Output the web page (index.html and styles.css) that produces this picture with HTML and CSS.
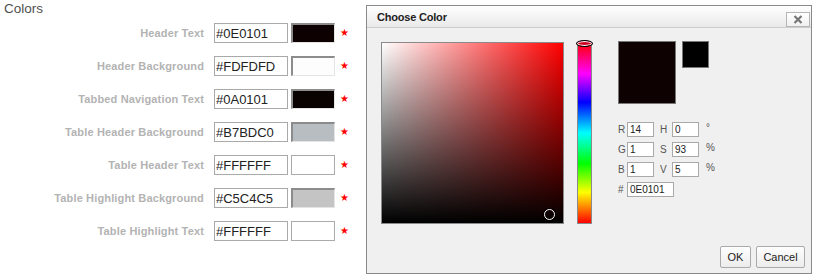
FILE: index.html
```html
<!DOCTYPE html>
<html>
<head>
<meta charset="utf-8">
<link rel="stylesheet" href="styles.css">
</head>
<body>
<div class="panel">
  <div class="heading">Colors</div>
  <div class="rows">
    <div class="lbl">Header Text</div><input class="hex" value="#0E0101"><span class="sw" style="background:#0E0101"></span><span class="star">★</span>
    <div class="lbl">Header Background</div><input class="hex" value="#FDFDFD"><span class="sw" style="background:#FDFDFD"></span><span class="star">★</span>
    <div class="lbl">Tabbed Navigation Text</div><input class="hex" value="#0A0101"><span class="sw" style="background:#0A0101"></span><span class="star">★</span>
    <div class="lbl">Table Header Background</div><input class="hex" value="#B7BDC0"><span class="sw" style="background:#B7BDC0"></span><span class="star">★</span>
    <div class="lbl">Table Header Text</div><input class="hex" value="#FFFFFF"><span class="sw sw-flat" style="background:#FFFFFF"></span><span class="star">★</span>
    <div class="lbl">Table Highlight Background</div><input class="hex" value="#C5C4C5"><span class="sw" style="background:#C5C4C5"></span><span class="star">★</span>
    <div class="lbl">Table Highlight Text</div><input class="hex" value="#FFFFFF"><span class="sw sw-flat" style="background:#FFFFFF"></span><span class="star">★</span>
  </div>
</div>

<div class="dlg">
  <div class="titlebar">
    <span class="title">Choose Color</span>
    <button class="close"><svg width="10" height="9" viewBox="0 0 10 9"><path d="M1.5 1 L8.5 8 M8.5 1 L1.5 8" stroke="#777" stroke-width="2.2" fill="none"/></svg></button>
  </div>
  <div class="dbody">
    <div class="sat"><span class="marker"></span></div>
    <div class="hue"><span class="handle"></span></div>
    <div class="side">
      <div class="previews">
        <div class="pv-new"></div>
        <div class="pv-old"></div>
      </div>
      <div class="fields">
        <div class="frow"><span class="fl">R</span><input class="fi" value="14"><span class="fl fl2">H</span><input class="fi" value="0"><span class="fu">°</span></div>
        <div class="frow"><span class="fl">G</span><input class="fi" value="1"><span class="fl fl2">S</span><input class="fi" value="93"><span class="fu">%</span></div>
        <div class="frow"><span class="fl">B</span><input class="fi" value="1"><span class="fl fl2">V</span><input class="fi" value="5"><span class="fu">%</span></div>
        <div class="frow"><span class="fl">#</span><input class="fi fi-hex" value="0E0101"></div>
      </div>
    </div>
  </div>
  <div class="footer">
    <button class="btn btn-ok">OK</button>
    <button class="btn btn-cancel">Cancel</button>
  </div>
</div>
</body>
</html>
```
FILE: styles.css
```css
* { box-sizing: border-box; }
body {
  margin: 0;
  width: 822px;
  height: 278px;
  background: #fff;
  font-family: "Liberation Sans", Arial, sans-serif;
  position: relative;
  overflow: hidden;
}
.panel { padding-top: 1px; }
.heading {
  padding-left: 4px;
  font-size: 13.5px;
  line-height: 16px;
  color: #505050;
}
.rows {
  margin-top: 6px;
  display: grid;
  grid-template-columns: 214px 77px 44px auto;
  grid-auto-rows: 20px;
  row-gap: 13px;
  align-items: center;
}
.lbl {
  text-align: right;
  font-size: 11px;
  font-weight: bold;
  letter-spacing: 0.15px;
  color: #b3b3b3;
  padding-right: 10px;
  white-space: nowrap;
}
.hex {
  width: 74px;
  height: 20px;
  border: 1px solid #a9a9a9;
  padding: 0 1px;
  font-family: "Liberation Sans", Arial, sans-serif;
  font-size: 13px;
  color: #222;
  background: #fff;
  margin: 0;
}
.sw {
  display: block;
  width: 44px;
  height: 20px;
  border-style: solid;
  border-width: 2px 1px 1px 2px;
  border-color: #8c8c8c #e4e4e4 #e4e4e4 #8c8c8c;
}
.sw-flat { border: 1px solid #ababab; }
.star {
  color: #f00;
  font-size: 10px;
  padding-left: 5px;
  line-height: 20px;
}

/* dialog */
.dlg {
  position: absolute;
  left: 366px;
  top: 5px;
  width: 446px;
  height: 269px;
  border: 1px solid #8a8a8a;
  background: #f0f0f0;
  display: flex;
  flex-direction: column;
  font-family: "Liberation Sans", Tahoma, sans-serif;
}
.titlebar {
  height: 22px;
  flex: none;
  border-bottom: 1px solid #cdcdcd;
  background: linear-gradient(#ffffff, #e9e9e9);
  display: flex;
  align-items: center;
  justify-content: space-between;
  padding: 0 1px 0 10px;
}
.title {
  font-size: 11px;
  font-weight: bold;
  color: #222;
  letter-spacing: -0.2px;
}
.close {
  width: 24px;
  height: 15px;
  margin: 5px 0 0 0;
  padding: 0;
  border: 1px solid #b5b5b5;
  background: linear-gradient(#ffffff, #f0f0f0);
  display: flex;
  align-items: center;
  justify-content: center;
}
.close svg { display: block; }
.dbody {
  display: flex;
  align-items: flex-start;
  padding: 14px 0 0 14px;
}
.sat {
  position: relative;
  width: 183px;
  height: 182px;
  border: 1px solid #8a8a8a;
  background:
    linear-gradient(to top, #000, rgba(0,0,0,0)),
    linear-gradient(to right, #fff, #f00);
}
.marker {
  position: absolute;
  left: 162px;
  top: 166px;
  width: 11px;
  height: 11px;
  border-radius: 50%;
  border: 1px solid #fff;
  box-shadow: 0 0 0 1px rgba(0,0,0,0.6);
}
.hue {
  position: relative;
  margin-left: 13px;
  width: 15px;
  height: 182px;
  border: 1px solid #8a8a8a;
  background: linear-gradient(to bottom, #f00 0%, #f0f 17%, #00f 33%, #0ff 50%, #0f0 67%, #ff0 83%, #f00 100%);
}
.handle {
  position: absolute;
  left: -2px;
  top: -3px;
  width: 17px;
  height: 7px;
  border-radius: 50%;
  border: 1px solid #000;
  background: #d00020;
  box-shadow: inset 0 0 0 1px #fff;
}
.side { margin-left: 26px; }
.previews { display: flex; align-items: flex-start; margin-top: -1px; }
.pv-new {
  width: 58px;
  height: 63px;
  border: 1px solid #777;
  background: #0E0101;
}
.pv-old {
  margin-left: 6px;
  width: 27px;
  height: 27px;
  border: 1px solid #777;
  background: #000;
}
.fields {
  margin-top: 18px;
  display: flex;
  flex-direction: column;
  gap: 5px;
}
.frow { display: flex; align-items: center; height: 15px; }
.fl {
  width: 9px;
  font-size: 10px;
  color: #555;
}
.fl2 { margin-left: 6px; width: 12px; }
.fi {
  width: 27px;
  height: 15px;
  margin: 0;
  padding: 0 2px;
  border: 1px solid #a9a9a9;
  background: #fff;
  font-family: "Liberation Sans", Tahoma, sans-serif;
  font-size: 10px;
  color: #222;
}
.fi-hex { width: 47px; }
.fu {
  margin-left: 7px;
  font-size: 10px;
  color: #555;
  align-self: flex-start;
  line-height: 12px;
}
.footer {
  margin-top: auto;
  display: flex;
  justify-content: flex-end;
  gap: 5px;
  padding: 0 6px 5px 0;
}
.btn {
  height: 22px;
  margin: 0;
  padding: 0;
  border: 1px solid #aaa;
  border-radius: 2px;
  background: linear-gradient(#fefefe, #ececec);
  font-family: "Liberation Sans", Tahoma, sans-serif;
  font-size: 11px;
  color: #222;
}
.btn-ok { width: 31px; }
.btn-cancel { width: 49px; }
```
